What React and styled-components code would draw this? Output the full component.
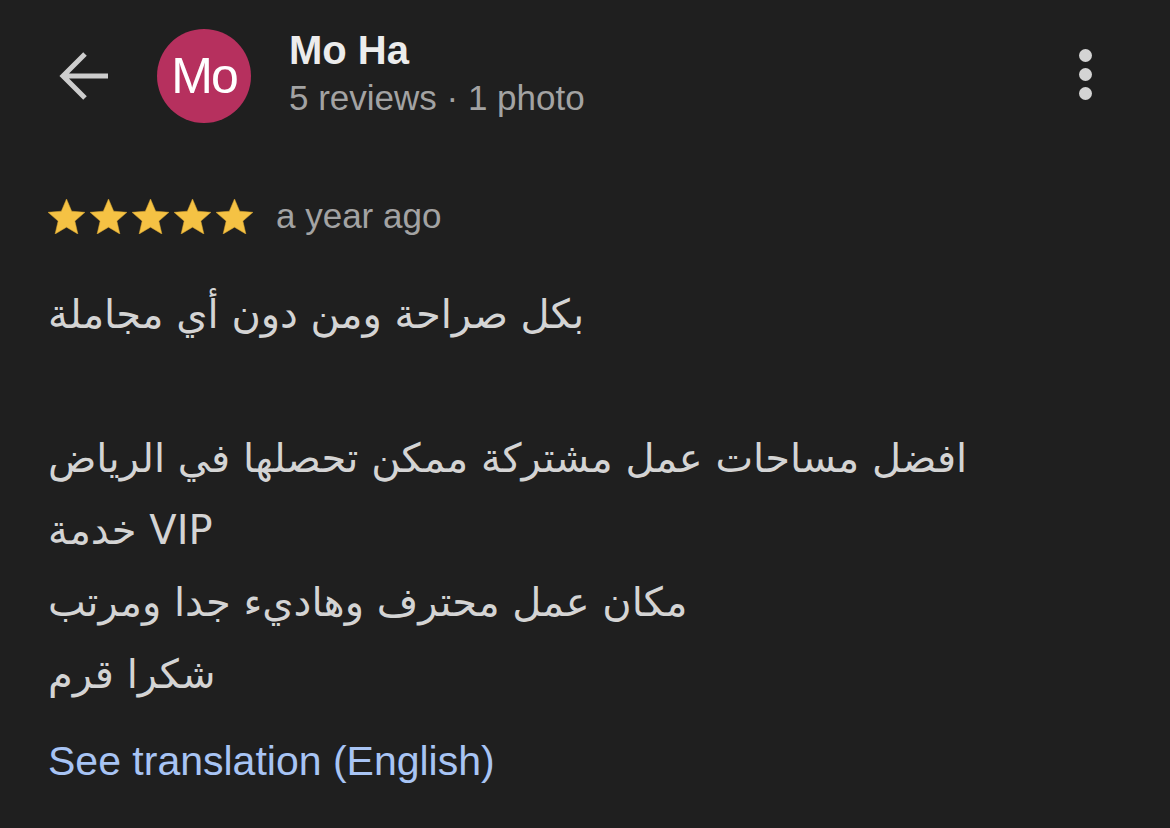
import React from "react";
import styled, { createGlobalStyle } from "styled-components";

const Global = createGlobalStyle`
  html, body { margin: 0; padding: 0; background: #1f1f1f; }
  body { font-family: "Liberation Sans", Arial, sans-serif; }
`;

const Page = styled.div`
  width: 1170px;
  height: 828px;
  background: #1f1f1f;
  box-sizing: border-box;
  padding: 29px 48px 0 48px;
  display: flex;
  flex-direction: column;
`;

const Header = styled.div`
  display: flex;
  align-items: center;
`;

const BackButton = styled.div`
  width: 50px;
  height: 48px;
  margin-left: 11px;
  display: flex;
  align-items: center;
  justify-content: center;
`;

const Avatar = styled.div`
  width: 94px;
  height: 94px;
  border-radius: 50%;
  background: #b6305e;
  color: #ffffff;
  display: flex;
  align-items: center;
  justify-content: center;
  font-size: 50px;
  letter-spacing: -2px;
  margin-left: 48px;
  flex-shrink: 0;
`;

const Info = styled.div`
  display: flex;
  flex-direction: column;
  margin-left: 38px;
  margin-top: -4px;
  flex: 1;
`;

const Name = styled.div`
  color: #ececec;
  font-size: 40px;
  font-weight: 700;
  line-height: 46px;
`;

const Meta = styled.div`
  color: #a3a3a3;
  font-size: 35px;
  line-height: 46px;
  margin-top: 2px;
`;

const Kebab = styled.div`
  display: flex;
  flex-direction: column;
  gap: 6px;
  margin-right: 30px;
  margin-top: -3px;
`;

const Dot = styled.span`
  width: 13px;
  height: 13px;
  border-radius: 50%;
  background: #d4d4d4;
`;

const RatingRow = styled.div`
  display: flex;
  align-items: center;
  margin-top: 75px;
  height: 36px;
`;

const Stars = styled.div`
  display: flex;
  gap: 5px;
`;

const When = styled.span`
  color: #a3a3a3;
  font-size: 35px;
  margin-left: 23px;
`;

const Body = styled.div`
  margin-top: 44px;
  color: #d4d4d4;
  font-family: "Geeza Pro", "DejaVu Sans", "Noto Sans", sans-serif;
  font-size: 40px;
  line-height: 72px;
  white-space: pre-line;
`;

const Link = styled.div`
  margin-top: 27px;
  color: #a8c4f4;
  font-size: 41px;
  line-height: 48px;
`;

const Star = () => (
  <svg width="37" height="35" viewBox="2 2 20 19">
    <path
      fill="#f5c244"
      stroke="#d9a632"
      strokeWidth="0.3"
      strokeLinejoin="round"
      d="M12 17.27L18.18 21l-1.64-7.03L22 9.24l-7.19-.61L12 2 9.19 8.63 2 9.24l5.46 4.73L5.82 21z"
    />
  </svg>
);

const text = `بكل صراحة ومن دون أي مجاملة

افضل مساحات عمل مشتركة ممكن تحصلها في الرياض
خدمة VIP
مكان عمل محترف وهاديء جدا ومرتب
شكرا قرم`;

export default function App() {
  return (
    <>
      <Global />
      <Page>
        <Header>
          <BackButton>
            <svg width="50" height="48" viewBox="0 0 50 48">
              <path
                d="M4 24 H49 M26 2 L4 24 L26 46"
                fill="none"
                stroke="#cdcdcd"
                strokeWidth="5"
                strokeLinecap="butt"
                strokeLinejoin="miter"
              />
            </svg>
          </BackButton>
          <Avatar>Mo</Avatar>
          <Info>
            <Name>Mo Ha</Name>
            <Meta>5 reviews · 1 photo</Meta>
          </Info>
          <Kebab>
            <Dot />
            <Dot />
            <Dot />
          </Kebab>
        </Header>
        <RatingRow>
          <Stars>
            {[0, 1, 2, 3, 4].map((i) => (
              <Star key={i} />
            ))}
          </Stars>
          <When>a year ago</When>
        </RatingRow>
        <Body>{text}</Body>
        <Link>See translation (English)</Link>
      </Page>
    </>
  );
}
